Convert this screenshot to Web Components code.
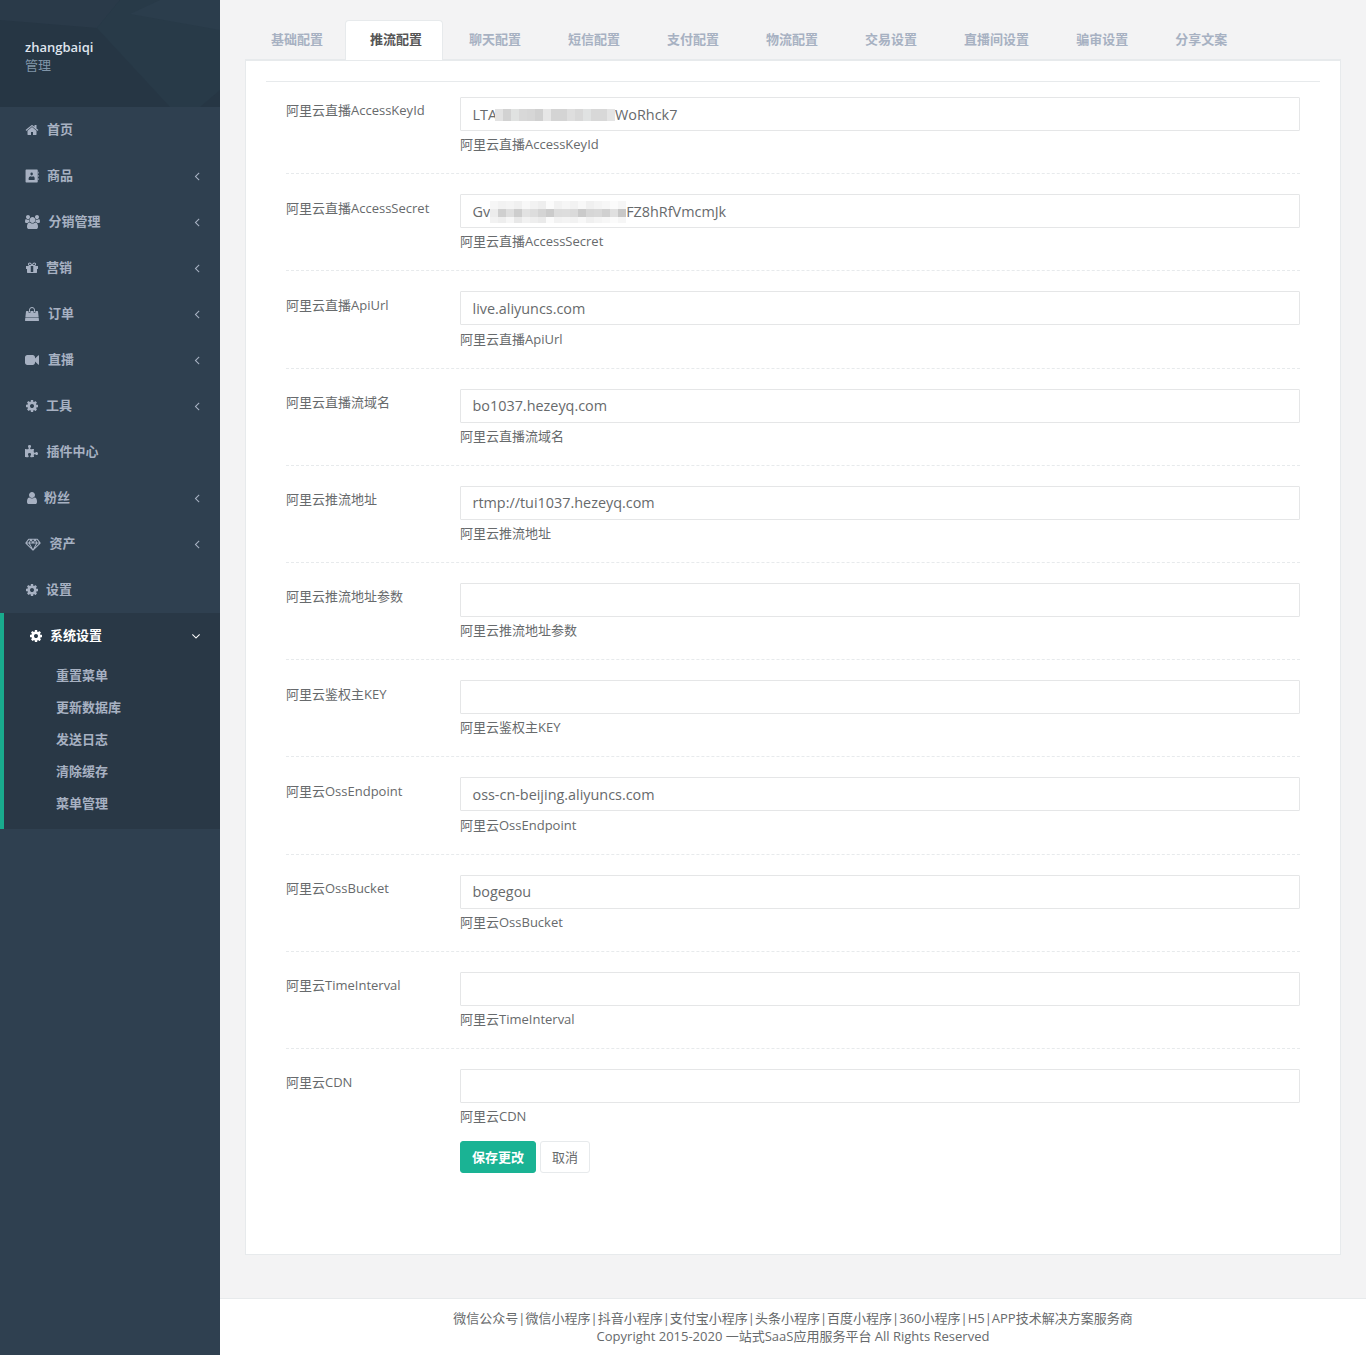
<!DOCTYPE html>
<html lang="zh">
<head>
<meta charset="utf-8">
<title>推流配置</title>
<style>
  html, body { margin: 0; padding: 0; background: #f3f3f4; }
  body { font: 13px/1.42857 "Open Sans", "Noto Sans CJK SC", sans-serif; color: #676a6c; }
</style>
</head>
<body>
<admin-page>
  <side-bar slot="side" user="zhangbaiqi" role="管理">
    <nav-item icon="home" label="首页" offset="22"></nav-item>
    <nav-item icon="contact" label="商品" offset="22" arrow></nav-item>
    <nav-item icon="group" label="分销管理" offset="23.5" arrow></nav-item>
    <nav-item icon="gift" label="营销" offset="21" arrow></nav-item>
    <nav-item icon="bag" label="订单" offset="23" arrow></nav-item>
    <nav-item icon="video" label="直播" offset="23" arrow></nav-item>
    <nav-item icon="cog" label="工具" offset="21" arrow></nav-item>
    <nav-item icon="puzzle" label="插件中心" offset="21.5"></nav-item>
    <nav-item icon="user" label="粉丝" offset="19" arrow></nav-item>
    <nav-item icon="diamond" label="资产" offset="24.5" arrow></nav-item>
    <nav-item icon="cog" label="设置" offset="21"></nav-item>
    <nav-item icon="cog" label="系统设置" offset="21" active>
      <a>重置菜单</a>
      <a>更新数据库</a>
      <a>发送日志</a>
      <a>清除缓存</a>
      <a>菜单管理</a>
    </nav-item>
  </side-bar>

  <config-tabs active="推流配置" tabs="基础配置,推流配置,聊天配置,短信配置,支付配置,物流配置,交易设置,直播间设置,骗审设置,分享文案"></config-tabs>

  <config-panel>
    <config-row label="阿里云直播AccessKeyId"><span>LTA</span><blur-patch cols="15" rows="1" tones="e2e2e2,d2d2d2,e0e2e1,d8d8d8,d6d6d6,d0d0d0,e6e6e6,d4d4d4,d4d4d4,dedede,d8d8d8,e0e2e2,d8d8d8,d8d8d8,e4e4e4"></blur-patch><span>WoRhck7</span></config-row>
    <config-row label="阿里云直播AccessSecret"><span>Gv</span><blur-patch wide cols="17" rows="3" tones="f6f6f6,f2f2f2,f4f4f4,f0f0f0,f8f8f8,f2f2f2,eeeeee,fbfbfb,f2f2f2,f6f6f6,f2f2f2,f8f8f8,f0f0f0,f4f4f4,f7f7f7,fbfbfb,f6f6f6,ececec,cfcfcf,dedede,cdcdcd,e2e2e2,dddddd,d4d4d4,cbcbcb,dcdcdc,dddddd,dadada,cacaca,d6d6d6,d8d8d8,d0d0d0,e0e0e0,c8c8c8,f2f2f2,eeeeee,f6f6f6,e8e8e8,f2f2f2,eeeeee,eaeaea,fbfbfb,f2f2f2,f4f4f4,f2f2f2,f8f8f8,f0f0f0,f4f4f4,f7f7f7,fbfbfb,f6f6f6"></blur-patch><span>FZ8hRfVmcmJk</span></config-row>
    <config-row label="阿里云直播ApiUrl">live.aliyuncs.com</config-row>
    <config-row label="阿里云直播流域名">bo1037.hezeyq.com</config-row>
    <config-row label="阿里云推流地址">rtmp://tui1037.hezeyq.com</config-row>
    <config-row label="阿里云推流地址参数"></config-row>
    <config-row label="阿里云鉴权主KEY"></config-row>
    <config-row label="阿里云OssEndpoint">oss-cn-beijing.aliyuncs.com</config-row>
    <config-row label="阿里云OssBucket">bogegou</config-row>
    <config-row label="阿里云TimeInterval"></config-row>
    <config-row label="阿里云CDN" last></config-row>
    <form-actions></form-actions>
  </config-panel>

  <page-footer slot="footer"></page-footer>
</admin-page>

<script>
// font awesome 4 shapes, all on a 1792 box unless the entry says otherwise
const ICONS = {
  home: '<path d="M1472 992v480q0 26-19 45t-45 19h-384v-384h-256v384h-384q-26 0-45-19t-19-45v-480q0-1 .5-3t.5-3l575-474 575 474q1 2 1 6zm223-69l-62 74q-8 9-21 11h-3q-13 0-21-7l-692-577-692 577q-12 8-24 7-13-2-21-11l-62-74q-8-10-7-23.5t11-21.5l719-599q32-26 76-26t76 26l244 204v-195q0-14 9-23t23-9h192q14 0 23 9t9 23v408l219 182q10 8 11 21.5t-7 23.5z"/>',
  contact: '<path fill-rule="evenodd" d="M160 60h1380q90 0 90 90v1492q0 90-90 90h-1380q-90 0-90-90v-1492q0-90 90-90zm690 400q-160 0-160 190t160 190 160-190-160-190zm-400 830q0 110 90 110h620q90 0 90-110 0-320-190-350-70 60-170 60t-170-60q-270 30-270 350z"/><path d="M1650 340h90v240h-90zM1650 760h90v240h-90zM1650 1180h90v240h-90z"/>',
  group: '<path d="M593 896q-162 5-265 128h-134q-82 0-138-40.5t-56-118.5q0-353 124-353 6 0 43.5 21t97.5 42.5 119 21.5q67 0 133-23-5 37-5 66 0 139 81 256zm1071 637q0 120-73 189.5t-194 69.5h-874q-121 0-194-69.5t-73-189.5q0-53 3.5-103.5t14-109 26.5-108.5 43-97.5 62-81 85.5-53.5 111.5-20q10 0 43 21.5t73 48 107 48 135 21.5 135-21.5 107-48 73-48 43-21.5q61 0 111.5 20t85.5 53.5 62 81 43 97.5 26.5 108.5 14 109 3.5 103.5zm-1024-1277q0 106-75 181t-181 75-181-75-75-181 75-181 181-75 181 75 75 181zm704 384q0 159-112.5 271.5t-271.5 112.5-271.5-112.5-112.5-271.5 112.5-271.5 271.5-112.5 271.5 112.5 112.5 271.5zm576 225q0 78-56 118.5t-138 40.5h-134q-103-123-265-128 81-117 81-256 0-29-5-66 66 23 133 23 59 0 119-21.5t97.5-42.5 43.5-21q124 0 124 353zm-128-609q0 106-75 181t-181 75-181-75-75-181 75-181 181-75 181 75 75 181z"/>',
  gift: '<path d="M1056 1356v-716h-320v716q0 25 18 38.5t46 13.5h192q28 0 46-13.5t18-38.5zm-456-844h195l-126-161q-26-31-69-31-40 0-68 28t-28 68 28 68 68 28zm688-96q0-40-28-68t-68-28q-43 0-69 31l-125 161h194q40 0 68-28t28-68zm376 256v320q0 14-9 23t-23 9h-96v416q0 40-28 68t-68 28h-1088q-40 0-68-28t-28-68v-416h-96q-14 0-23-9t-9-23v-320q0-14 9-23t23-9h440q-93 0-158.5-65.5t-65.5-158.5 65.5-158.5 158.5-65.5q107 0 168 77l128 165 128-165q61-77 168-77 93 0 158.5 65.5t65.5 158.5-65.5 158.5-158.5 65.5h440q14 0 23 9t9 23z"/>',
  bag: '<path d="M1757 1408l35 313q3 28-16 50-19 21-48 21h-1664q-29 0-48-21-19-22-16-50l35-313h1722zm-93-839l86 775h-1708l86-775q3-24 21-40.5t43-16.5h256v128q0 53 37.5 90.5t90.5 37.5 90.5-37.5 37.5-90.5v-128h384v128q0 53 37.5 90.5t90.5 37.5 90.5-37.5 37.5-90.5v-128h256q25 0 43 16.5t21 40.5zm-384-185v256q0 26-19 45t-45 19-45-19-19-45v-256q0-106-75-181t-181-75-181 75-75 181v256q0 26-19 45t-45 19-45-19-19-45v-256q0-159 112.5-271.5t271.5-112.5 271.5 112.5 112.5 271.5z"/>',
  video: '<path d="M1792 352v1088q0 42-39 59-13 5-25 5-27 0-45-19l-403-403v166q0 119-84.5 203.5t-203.5 84.5h-704q-119 0-203.5-84.5t-84.5-203.5v-704q0-119 84.5-203.5t203.5-84.5h704q119 0 203.5 84.5t84.5 203.5v165l403-402q18-19 45-19 12 0 25 5 39 17 39 59z"/>',
  cog: '<path d="M1152 896q0-106-75-181t-181-75-181 75-75 181 75 181 181 75 181-75 75-181zm512-109v222q0 12-8 23t-20 13l-185 28q-19 54-39 91 35 50 107 138 10 12 10 25t-9 23q-27 37-99 108t-94 71q-12 0-26-9l-138-108q-44 23-91 38-16 136-29 186-7 28-36 28h-222q-14 0-24.5-8.5t-11.5-21.5l-28-184q-49-16-90-37l-141 107q-10 9-25 9-14 0-25-11-126-114-165-168-7-10-7-23 0-12 8-23 15-21 51-66.5t54-70.5q-27-50-41-99l-183-27q-13-2-21-12.5t-8-23.5v-222q0-12 8-23t19-13l186-28q14-46 39-92-40-57-107-138-10-12-10-24 0-10 9-23 26-36 98.5-107.5t94.5-71.5q13 0 26 10l138 107q44-23 91-38 16-136 29-186 7-28 36-28h222q14 0 24.5 8.5t11.5 21.5l28 184q49 16 90 37l142-107q9-9 24-9 13 0 25 10 129 119 165 170 7 8 7 22 0 12-8 23-15 21-51 66.5t-54 70.5q26 50 41 98l183 28q13 2 21 12.5t8 23.5z"/>',
  puzzle: '<path d="M1664 1098q0 81-44.5 135t-123.5 54q-41 0-77.5-17.5t-59-38-56.5-38-71-17.5q-110 0-110 124 0 39 16 115t15 115v5q-22 0-33 1-34 3-97.5 11.5t-115.5 13.5-98 5q-61 0-103-26.5t-42-83.5q0-37 17.5-71t38-56.5 38-59 17.5-77.5q0-79-54-123.5t-135-44.5q-84 0-143 45.5t-59 127.5q0 43 15 83t33.5 64.5 33.5 53 15 50.5q0 45-46 89-37 35-117 35-95 0-245-24-9-2-27.5-4t-27.5-4l-13-2q-1 0-3-1-2 0-2-1v-1024q2 1 17.5 3.5t34 5 21.5 3.5q150 24 245 24 80 0 117-35 46-44 46-89 0-22-15-50.5t-33.5-53-33.5-64.5-15-83q0-82 59-127.5t144-45.5q80 0 134 44.5t54 123.5q0 41-17.5 77.5t-38 59-38 56.5-17.5 71q0 57 42 83.5t103 26.5q64 0 180-15t163-17v2q-1 2-3.5 17.5t-5 34-3.5 21.5q-24 150-24 245 0 80 35 117 44 46 89 46 22 0 50.5-15t53-33.5 64.5-33.5 83-15q82 0 127.5 59t45.5 143z"/>',
  user: '<path d="M1536 1399q0 109-62.5 187t-150.5 78h-854q-88 0-150.5-78t-62.5-187q0-85 8.5-160.5t31.5-152 58.5-131 94-89 134.5-34.5q131 128 313 128t313-128q76 0 134.5 34.5t94 89 58.5 131 31.5 152 8.5 160.5zm-256-887q0 159-112.5 271.5t-271.5 112.5-271.5-112.5-112.5-271.5 112.5-271.5 271.5-112.5 271.5 112.5 112.5 271.5z"/>',
  diamond: '<path fill="none" stroke="currentColor" stroke-width="130" stroke-linejoin="round" d="M420 300h1120l360 480-920 900-920-900zM60 780h1840M700 300l-220 480 500 900 500-900-220-480M700 300l280 480 280-480"/>',
  left: '<path d="M1203 544q0 13-10 23l-393 393 393 393q10 10 10 23t-10 23l-50 50q-10 10-23 10t-23-10l-466-466q-10-10-10-23t10-23l466-466q10-10 23-10t23 10l50 50q10 10 10 23z"/>',
  down: '<path d="M1395 736q0 13-10 23l-466 466q-10 10-23 10t-23-10l-466-466q-10-10-10-23t10-23l50-50q10-10 23-10t23 10l393 393 393-393q10-10 23-10t23 10l50 50q10 10 10 23z"/>'
};
const ICON_BOX = { group: '0 0 1920 1792', diamond: '0 0 1960 1792' };
const ICON_WIDTH = { group: 15, diamond: 16, video: 14, bag: 14 };

function iconSvg(name, size) {
  const w = ICON_WIDTH[name] || size;
  return `<svg width="${w}" height="${size}" viewBox="${ICON_BOX[name] || '0 0 1792 1792'}" fill="currentColor" aria-hidden="true">${ICONS[name]}</svg>`;
}

class AdminPage extends HTMLElement {
  constructor() {
    super();
    this.attachShadow({ mode: 'open' }).innerHTML = `
      <style>
        :host { display: flex; min-height: 1355px; }
        .side { flex: 0 0 220px; width: 220px; background: #2f4050; }
        .main { flex: 1; min-width: 0; display: flex; flex-direction: column; }
        .content { flex: 1; padding: 20px 25px 43px; }
      </style>
      <div class="side"><slot name="side"></slot></div>
      <div class="main">
        <div class="content"><slot></slot></div>
        <slot name="footer"></slot>
      </div>`;
  }
}

class SideBar extends HTMLElement {
  constructor() {
    super();
    this.attachShadow({ mode: 'open' }).innerHTML = `
      <style>
        :host { display: block; }
        .profile { position: relative; height: 107px; box-sizing: border-box; padding: 38px 25px 0; background: #263644; overflow: hidden; line-height: 18px; }
        .profile svg { position: absolute; left: 0; top: 0; }
        .profile div { position: relative; }
        .name { color: #dfe4ed; font-weight: 600; }
        .role { color: #8095a8; }
      </style>
      <div class="profile">
        <svg width="220" height="107" viewBox="0 0 220 107">
          <polygon points="0,0 120,0 97,28 0,20" fill="#2a3a49"/>
          <polygon points="120,0 220,0 220,90 200,107 170,107 97,28" fill="#283a48"/>
          <polygon points="160,0 220,0 220,30 130,14" fill="#2b3d4c"/>
        </svg>
        <div class="name">${this.getAttribute('user')}</div>
        <div class="role">${this.getAttribute('role')}</div>
      </div>
      <slot></slot>`;
  }
}

class NavItem extends HTMLElement {
  constructor() {
    super();
    const active = this.hasAttribute('active');
    const arrow = active ? iconSvg('down', 14) : this.hasAttribute('arrow') ? iconSvg('left', 14) : '';
    this.attachShadow({ mode: 'open' }).innerHTML = `
      <style>
        :host { display: block; }
        :host([active]) { background: #293846; border-left: 4px solid #19aa8d; padding-bottom: 10px; }
        .row { box-sizing: border-box; display: flex; align-items: center; height: 46px; padding: 0 16px 1px 25px; color: #a7b1c2; font-weight: 600; }
        .ico { flex: none; display: flex; align-items: center; width: var(--offset); }
        .ico svg { margin-left: -.5px; }
        .txt { flex: 1; }
        .arrow { display: flex; color: #a7b1c2; }
        .active { color: #fff; padding-right: 17px; }
        .active .arrow { color: #fff; }
        ::slotted(a) { display: block; height: 32px; line-height: 32px; padding-left: 52px; color: #a7b1c2; font-weight: 600; }
      </style>
      <div class="row ${active ? 'active' : ''}" style="--offset:${this.getAttribute('offset')}px">
        <span class="ico">${iconSvg(this.getAttribute('icon'), 14)}</span>
        <span class="txt">${this.getAttribute('label')}</span>
        <span class="arrow">${arrow}</span>
      </div>
      <slot></slot>`;
  }
}

class ConfigTabs extends HTMLElement {
  constructor() {
    super();
    const cur = this.getAttribute('active');
    const tabs = this.getAttribute('tabs').split(',').map(t =>
      `<span class="tab ${t === cur ? 'on' : ''}">${t}</span>`).join('');
    this.attachShadow({ mode: 'open' }).innerHTML = `
      <style>
        :host { display: block; }
        .tabs { display: flex; height: 40px; padding-left: 1px; background: linear-gradient(#e7eaec, #e7eaec) bottom / 100% 1px no-repeat; }
        .tab { box-sizing: border-box; height: 40px; line-height: 37px; padding: 0 20px 0 24px; margin-right: 1px; border: 1px solid transparent; border-bottom: 0; color: #a7b1c2; font-weight: 600; white-space: nowrap; }
        .tab.on { background: #fff; border-color: #e7eaec; border-radius: 4px 4px 0 0; color: #555; }
      </style>
      <div class="tabs">${tabs}</div>`;
  }
}

class ConfigPanel extends HTMLElement {
  constructor() {
    super();
    this.attachShadow({ mode: 'open' }).innerHTML = `
      <style>
        :host { display: block; }
        .panel { box-sizing: border-box; height: 1195px; background: #fff; border: 1px solid #e7eaec; padding: 20px 20px 0; }
        hr { border: 0; border-top: 1px solid #e7eaec; margin: 0 0 15px; }
        .body { padding: 0 20px; }
      </style>
      <div class="panel">
        <hr>
        <div class="body"><slot></slot></div>
      </div>`;
  }
}

class ConfigRow extends HTMLElement {
  constructor() {
    super();
    const label = this.getAttribute('label');
    this.attachShadow({ mode: 'open' }).innerHTML = `
      <style>
        :host { display: block; border-bottom: 1px dashed #e7eaec; margin-bottom: 20px; padding-bottom: 19.33px; }
        :host([last]) { border-bottom: 0; margin-bottom: 0; padding-bottom: .7px; }
        .grid { display: grid; grid-template-columns: 174px 1fr; }
        .lab { padding-top: 4.4px; }
        .input { box-sizing: border-box; display: flex; align-items: center; height: 34px; padding: 2px 12px 0 11.5px; border: 1px solid #e5e6e7; border-radius: 1px; font-size: 14.4px; white-space: nowrap; }
        .help { margin-top: 4.3px; }
      </style>
      <div class="grid">
        <div class="lab">${label}</div>
        <div>
          <div class="input"><slot></slot></div>
          <div class="help">${label}</div>
        </div>
      </div>`;
  }
}

class BlurPatch extends HTMLElement {
  constructor() {
    super();
    const cols = +this.getAttribute('cols');
    const rows = +this.getAttribute('rows');
    const tiles = this.getAttribute('tones').split(',').map(c => `<i style="background:#${c}"></i>`).join('');
    this.attachShadow({ mode: 'open' }).innerHTML = `
      <style>
        :host { display: inline-block; flex: none; width: ${cols * 8}px; height: ${rows === 1 ? 12 : 20}px; position: relative; margin-left: ${rows === 1 ? -2 : 0}px; }
        .tiles { position: absolute; left: 0; top: ${rows === 1 ? 0 : -1}px; display: grid; grid-template-columns: repeat(${cols}, 8px); grid-auto-rows: ${rows === 1 ? '12px' : '8px 8px 6px'}; }
        i { display: block; }
      </style>
      <div class="tiles">${tiles}</div>`;
  }
}

class FormActions extends HTMLElement {
  constructor() {
    super();
    this.attachShadow({ mode: 'open' }).innerHTML = `
      <style>
        :host { display: flex; gap: 4px; margin: 15px 0 0 174px; }
        button { box-sizing: border-box; height: 32px; padding: 0 11px; font: inherit; border-radius: 3px; border: 1px solid #e7eaec; background: #fff; color: #676a6c; }
        .save { background: #1ab394; border-color: #1ab394; color: #fff; font-weight: 600; }
      </style>
      <button class="save">保存更改</button>
      <button>取消</button>`;
  }
}

class PageFooter extends HTMLElement {
  constructor() {
    super();
    const links = ['微信公众号', '微信小程序', '抖音小程序', '支付宝小程序', '头条小程序', '百度小程序', '360小程序', 'H5', 'APP技术解决方案服务商'];
    this.attachShadow({ mode: 'open' }).innerHTML = `
      <style>
        :host { display: block; box-sizing: border-box; height: 57px; background: #fff; border-top: 1px solid #e7eaec; padding-top: 9.5px; text-align: center; line-height: 18.6px; }
      </style>
      <div>${links.join('|')}</div>
      <div>Copyright 2015-2020 一站式SaaS应用服务平台 All Rights Reserved</div>`;
  }
}

customElements.define('admin-page', AdminPage);
customElements.define('side-bar', SideBar);
customElements.define('nav-item', NavItem);
customElements.define('config-tabs', ConfigTabs);
customElements.define('config-panel', ConfigPanel);
customElements.define('config-row', ConfigRow);
customElements.define('blur-patch', BlurPatch);
customElements.define('form-actions', FormActions);
customElements.define('page-footer', PageFooter);
</script>
</body>
</html>
